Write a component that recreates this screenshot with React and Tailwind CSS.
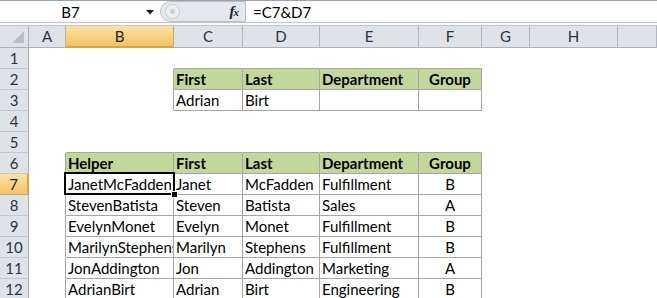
import React from "react";

const COLS = ["A", "B", "C", "D", "E", "F", "G", "H", ""];
const ROWS = [1, 2, 3, 4, 5, 6, 7, 8, 9, 10, 11, 12];

const DATA = {
  "2,3": "First", "2,4": "Last", "2,5": "Department", "2,6": "Group",
  "3,3": "Adrian", "3,4": "Birt",
  "6,2": "Helper", "6,3": "First", "6,4": "Last", "6,5": "Department", "6,6": "Group",
  "7,2": "JanetMcFadden", "7,3": "Janet", "7,4": "McFadden", "7,5": "Fulfillment", "7,6": "B",
  "8,2": "StevenBatista", "8,3": "Steven", "8,4": "Batista", "8,5": "Sales", "8,6": "A",
  "9,2": "EvelynMonet", "9,3": "Evelyn", "9,4": "Monet", "9,5": "Fulfillment", "9,6": "B",
  "10,2": "MarilynStephens", "10,3": "Marilyn", "10,4": "Stephens", "10,5": "Fulfillment", "10,6": "B",
  "11,2": "JonAddington", "11,3": "Jon", "11,4": "Addington", "11,5": "Marketing", "11,6": "A",
  "12,2": "AdrianBirt", "12,3": "Adrian", "12,4": "Birt", "12,5": "Engineering", "12,6": "B",
};

function inTable(r, c) {
  return (r >= 2 && r <= 3 && c >= 3 && c <= 6) || (r >= 6 && r <= 13 && c >= 2 && c <= 6);
}
function isHead(r, c) {
  return (r === 2 && c >= 3 && c <= 6) || (r === 6 && c >= 2 && c <= 6);
}

function Cell({ r, c }) {
  const text = DATA[`${r},${c}`];
  const right = inTable(r, c) || inTable(r, c + 1);
  const bottom = inTable(r, c) || inTable(r + 1, c);
  const head = isHead(r, c);
  const center = c === 6;
  const selected = r === 7 && c === 2;
  return (
    <div
      className={[
        "relative h-[21px] border-b border-r whitespace-nowrap leading-[20px] text-[15px] text-black px-[2px]",
        right ? "border-r-[#a6a6a6]" : "border-r-white",
        bottom ? "border-b-[#a6a6a6]" : "border-b-white",
        head ? "bg-[#c4d79b] font-bold" : "bg-white",
        center ? "text-center" : "text-left",
        selected ? "overflow-visible z-10" : "overflow-hidden",
      ].join(" ")}
    >
      {selected ? (
        <span className="block overflow-hidden">{text}</span>
      ) : (
        text
      )}
      {selected && (
        <>
          <div className="absolute left-[-2px] top-[-2px] right-[-2px] bottom-[-1px] border-2 border-black pointer-events-none" />
          <div className="absolute right-[-5px] bottom-[-4px] w-[7px] h-[7px] bg-black border border-white" />
        </>
      )}
    </div>
  );
}

export default function App() {
  return (
    <div className="w-[657px] h-[298px] overflow-hidden bg-white [font-family:Lato,'Noto_Sans',sans-serif]">
      {/* Formula bar */}
      <div className="h-[22px] border-t border-[#9ba2aa] flex bg-white">
        <div className="w-[160px] h-full relative flex items-center">
          <span className="w-[141px] text-center text-[15px] leading-[20px] text-black">B7</span>
          <svg width="8" height="5" viewBox="0 0 8 5" className="absolute left-[146px] top-[9px]">
            <path d="M0 0 H8 L4 4.5 Z" fill="#222" />
          </svg>
        </div>
        <div className="w-[86px] h-full flex items-center bg-[#e4e7eb] rounded-l-[11px] border-l border-y border-r border-[#b9bfc7]">
          <div className="ml-[4px] w-[15px] h-[15px] rounded-full bg-[#eceef1] border border-[#c7ccd2] flex items-center justify-center">
            <div className="w-[5px] h-[5px] rounded-full bg-[#c9cdd3]" />
          </div>
          <span className="ml-auto mr-[7px] [font-family:'Liberation_Serif',serif] italic font-bold text-[15px] leading-none text-[#222] tracking-[-1px]">
            f<span className="text-[11px]">x</span>
          </span>
        </div>
        <div className="flex-1 h-full flex items-center pl-[7px] text-[15px] leading-[20px] text-black">=C7&amp;D7</div>
      </div>
      <div className="h-[4px] border-t border-b border-[#c2c6cc] bg-[#f7f8f9]" />

      {/* Sheet grid */}
      <div className="grid grid-cols-[29px_37px_108px_69px_77px_99px_63px_48px_88px_1fr]">
        {/* Column headers */}
        <div className="h-[22px] bg-[#dfe3e8] border-r border-b border-[#a9b0b8] relative">
          <svg width="12" height="12" viewBox="0 0 12 12" className="absolute right-[4px] bottom-[4px]">
            <path d="M12 0 V12 H0 Z" fill="#b9bec5" />
          </svg>
        </div>
        {COLS.map((col, i) =>
          col === "B" ? (
            <div
              key={i}
              className="h-[22px] bg-gradient-to-b from-[#fbe2a8] to-[#f4c460] border-r border-r-[#c9a35a] border-b-2 border-b-[#e2a23a] flex items-center justify-center text-[15px] text-[#222]"
            >
              {col}
            </div>
          ) : (
            <div
              key={i}
              className="h-[22px] bg-[#dfe3e8] border-r border-r-[#b0b6bd] border-b border-b-[#a9b0b8] flex items-center justify-center text-[15px] text-[#2a3340]"
            >
              {col}
            </div>
          )
        )}

        {ROWS.map((r) => (
          <React.Fragment key={r}>
            {r === 7 ? (
              <div className="h-[21px] bg-gradient-to-b from-[#fbe2a8] to-[#f4c460] border-r-2 border-r-[#e2a23a] border-b border-b-[#c9a35a] flex items-center justify-center text-[15px] leading-[20px] text-[#222]">
                {r}
              </div>
            ) : (
              <div className="h-[21px] bg-[#dfe3e8] border-r border-r-[#a9b0b8] border-b border-b-[#c3c8ce] flex items-center justify-center text-[15px] leading-[20px] text-[#2a3340]">
                {r}
              </div>
            )}
            {COLS.map((_, ci) => (
              <Cell key={ci} r={r} c={ci + 1} />
            ))}
          </React.Fragment>
        ))}
      </div>
    </div>
  );
}
